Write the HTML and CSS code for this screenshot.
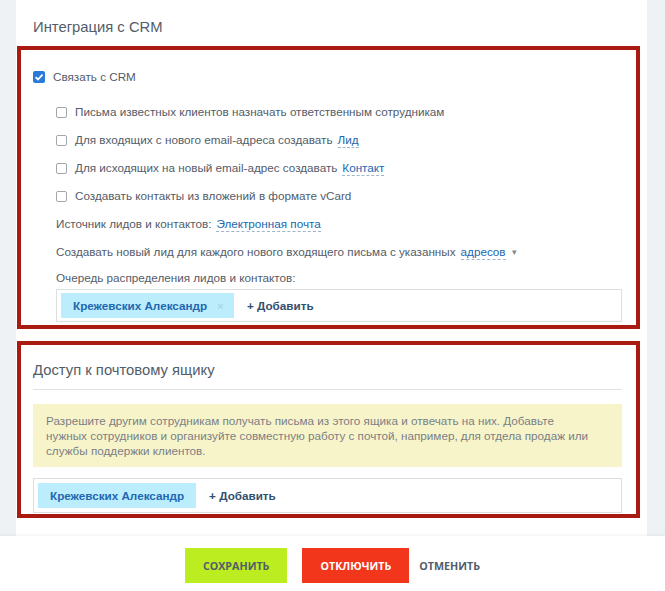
FILE: index.html
```html
<!DOCTYPE html>
<html lang="ru">
<head>
    <meta charset="UTF-8">
    <title>Интеграция с CRM</title>
    <link rel="stylesheet" href="styles.css">
</head>
<body>
    <div class="panel">
        <div class="panel-title">Интеграция с CRM</div>

        <div class="mark-box crm-box">
            <label class="row">
                <span class="check checked">
                    <svg viewBox="0 0 12 12" width="12" height="12"><path d="M2.6 6.2 5 8.5 9.5 3.6" fill="none" stroke="#fff" stroke-width="1.8"/></svg>
                </span>
                Связать с CRM
            </label>

            <div class="sub">
                <label class="row"><span class="check"></span>Письма известных клиентов назначать ответственным сотрудникам</label>
                <label class="row"><span class="check"></span>Для входящих с нового email-адреса создавать <a class="dash">Лид</a></label>
                <label class="row"><span class="check"></span>Для исходящих на новый email-адрес создавать <a class="dash">Контакт</a></label>
                <label class="row"><span class="check"></span>Создавать контакты из вложений в формате vCard</label>

                <div class="row text first">Источник лидов и контактов: <a class="dash">Электронная почта</a></div>
                <div class="row text">Создавать новый лид для каждого нового входящего письма с указанных <a class="dash">адресов</a><span class="caret">&#9662;</span></div>
                <div class="row text last">Очередь распределения лидов и контактов:</div>

                <div class="tiles">
                    <span class="tile">Крежевских Александр <span class="tile-x">&times;</span></span>
                    <span class="add">+ Добавить</span>
                </div>
            </div>
        </div>

        <div class="mark-box access-box">
            <div class="section-title">Доступ к почтовому ящику</div>
            <div class="notice">
                Разрешите другим сотрудникам получать письма из этого ящика и отвечать на них. Добавьте<br>
                нужных сотрудников и организуйте совместную работу с почтой, например, для отдела продаж или<br>
                службы поддержки клиентов.
            </div>
            <div class="tiles tall">
                <span class="tile">Крежевских Александр</span>
                <span class="add">+ Добавить</span>
            </div>
        </div>
    </div>

    <div class="footer">
        <button class="btn btn-save">Сохранить</button>
        <button class="btn btn-off">Отключить</button>
        <button class="btn-link">Отменить</button>
    </div>
</body>
</html>
```

FILE: styles.css
```css
body {
    margin: 0;
    background: #eef2f4;
    font-family: "Liberation Sans", Arial, sans-serif;
    font-size: 11.7px;
    color: #535c69;
}
.panel {
    background: #fff;
    margin: 0 18px 0 16px;
    padding: 17px 0 18px 1px;
}
.panel-title {
    font-size: 14.8px;
    line-height: 20px;
    padding-left: 16px;
    margin-bottom: 9px;
}
.mark-box {
    box-sizing: border-box;
    width: 623px;
    border: 4px solid #a91b10;
    padding: 0 14px 0 12px;
}
.crm-box {
    padding-top: 17px;
    padding-bottom: 3px;
}
.access-box {
    margin-top: 12px;
    padding-top: 15px;
    padding-bottom: 1px;
}
.row {
    display: flex;
    align-items: center;
    height: 20px;
    line-height: 20px;
    white-space: nowrap;
}
.check {
    box-sizing: border-box;
    width: 12px;
    height: 12px;
    margin-right: 8px;
    border-radius: 2px;
    display: flex;
}
.check.checked {
    background: #2a7ad9;
    border: 0;
}
.sub {
    margin-left: 23px;
    margin-top: 15px;
}
.sub .row {
    margin-bottom: 8px;
}
.sub .check {
    width: 11px;
    height: 11px;
    border: 1px solid #a2a7ad;
    margin-right: 8px;
}
.sub .row.first {
    margin-top: 7px;
}
.sub .row.last {
    margin-bottom: 1px;
}
.sub .row.text:nth-child(6) {
    margin-bottom: 6px;
}
.dash {
    color: #2067b0;
    border-bottom: 1px dashed #9fb5c9;
    line-height: 15px;
    margin-left: 5px;
}
.caret {
    font-size: 9px;
    color: #80868e;
    margin-left: 6px;
}
.tiles {
    display: flex;
    align-items: center;
    border: 1px solid #dcdfe2;
    padding: 3px 4px;
}
.tiles.tall {
    padding: 4px 4px;
}
.tile {
    display: flex;
    align-items: center;
    height: 25px;
    padding: 0 12px;
    background: #bcedfc;
    color: #1f67b0;
    font-weight: bold;
}
.tile-x {
    color: #a6cfdd;
    font-weight: normal;
    margin-left: 10px;
    margin-right: -2px;
}
.add {
    color: #34506f;
    font-weight: bold;
    margin-left: 13px;
}
.section-title {
    font-size: 14.8px;
    line-height: 20px;
    padding-bottom: 9px;
    border-bottom: 1px solid #dfe3e6;
}
.notice {
    margin-top: 14px;
    background: #f8f4c9;
    color: #7a7f86;
    line-height: 15px;
    padding: 9px 13px;
}
.access-box .tiles {
    margin-top: 11px;
}
.footer {
    background: #fff;
    box-shadow: 0 -1px 3px rgba(0, 0, 0, 0.06);
    display: flex;
    justify-content: center;
    align-items: center;
    padding: 12px 0 20px;
}
.btn {
    height: 35px;
    padding: 0 18px;
    border: 0;
    font-family: "Open Sans", sans-serif;
    font-size: 10.7px;
    font-weight: bold;
    text-transform: uppercase;
    cursor: pointer;
}
.btn-save {
    background: #bbed21;
    color: #535c69;
}
.btn-off {
    background: #f1361b;
    color: #fff;
    margin-left: 15px;
}
.btn-link {
    background: none;
    border: 0;
    padding: 0;
    margin-left: 10px;
    font-family: "Open Sans", sans-serif;
    font-size: 10.7px;
    font-weight: bold;
    color: #535c69;
    text-transform: uppercase;
}
```
